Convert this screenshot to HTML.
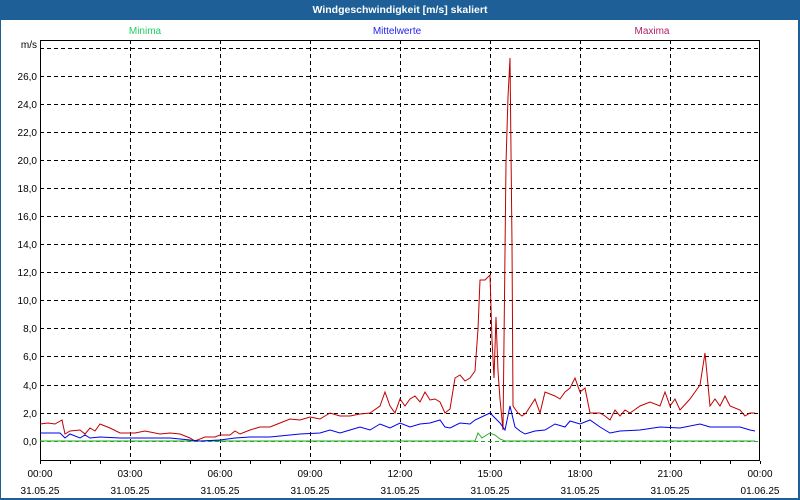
<!DOCTYPE html>
<html><head><meta charset="utf-8"><style>
html,body{margin:0;padding:0;width:800px;height:500px;overflow:hidden;background:#1d5f96}
svg{display:block}
text{font-family:"Liberation Sans",sans-serif;font-size:10px}
</style></head><body>
<svg width="800" height="500" xmlns="http://www.w3.org/2000/svg">
<rect x="0" y="0" width="800" height="500" fill="#1d5f96"/>
<rect x="1" y="20" width="797" height="478" fill="#ffffff"/>
<text x="400" y="13" fill="#fff" text-anchor="middle" font-weight="bold" style="font-size:10.5px">Windgeschwindigkeit [m/s] skaliert</text>
<text x="145" y="34" fill="#22cc66" text-anchor="middle">Minima</text>
<text x="397" y="34" fill="#2222ee" text-anchor="middle">Mittelwerte</text>
<text x="652" y="34" fill="#b0206a" text-anchor="middle">Maxima</text>
<g stroke="#000" stroke-width="1" stroke-dasharray="4,3" fill="none">
<path d="M40 48.5H760M40 76.5H760M40 104.5H760M40 132.5H760M40 160.5H760M40 188.5H760M40 216.5H760M40 244.5H760M40 272.5H760M40 300.5H760M40 328.5H760M40 356.5H760M40 385.5H760M40 413.5H760"/>
<path d="M130.5 40V460M220.5 40V460M310.5 40V460M400.5 40V460M490.5 40V460M580.5 40V460M670.5 40V460"/>
</g>
<path d="M40 441.5H760" stroke="#22aa22" stroke-dasharray="4,3"/>
<rect x="40.5" y="40.5" width="719" height="420" fill="none" stroke="#000"/>
<path d="M40.5 461v3M70.5 461v3M100.5 461v3M130.5 461v3M160.5 461v3M190.5 461v3M220.5 461v3M250.5 461v3M280.5 461v3M310.5 461v3M340.5 461v3M370.5 461v3M400.5 461v3M430.5 461v3M460.5 461v3M490.5 461v3M520.5 461v3M550.5 461v3M580.5 461v3M610.5 461v3M640.5 461v3M670.5 461v3M700.5 461v3M730.5 461v3M760.5 461v3" stroke="#000"/>
<g fill="#000" text-anchor="end">
<text x="37" y="48">m/s</text>
<text x="37" y="80">26,0</text><text x="37" y="108">24,0</text><text x="37" y="136">22,0</text><text x="37" y="164">20,0</text><text x="37" y="192">18,0</text><text x="37" y="220">16,0</text><text x="37" y="248">14,0</text><text x="37" y="276">12,0</text><text x="37" y="304">10,0</text><text x="37" y="332">8,0</text><text x="37" y="360">6,0</text><text x="37" y="389">4,0</text><text x="37" y="417">2,0</text><text x="37" y="445">0,0</text>
</g>
<g fill="#000" text-anchor="middle">
<text x="40" y="477">00:00</text><text x="130" y="477">03:00</text><text x="220" y="477">06:00</text><text x="310" y="477">09:00</text><text x="400" y="477">12:00</text><text x="490" y="477">15:00</text><text x="580" y="477">18:00</text><text x="670" y="477">21:00</text><text x="760" y="477">00:00</text>
<text x="40" y="494">31.05.25</text><text x="130" y="494">31.05.25</text><text x="220" y="494">31.05.25</text><text x="310" y="494">31.05.25</text><text x="400" y="494">31.05.25</text><text x="490" y="494">31.05.25</text><text x="580" y="494">31.05.25</text><text x="670" y="494">31.05.25</text><text x="760" y="494">01.06.25</text>
</g>
<polyline fill="none" stroke="#22aa22" points="40,441 470,441 475,441 478,433 482,438 485,436 490,433 495,435 500,439 505,441 755,441"/>
<polyline fill="none" stroke="#c00000" points="40,424 48,423 55,424 62,420 65,434 70,431 80,430 85,434 90,428 95,431 100,424 110,428 120,433 135,433 145,431 160,434 170,433 180,434 190,438 195,441 205,437 215,437 220,435 230,435 235,431 240,434 250,430 260,427 270,427 280,423 290,419 300,420 310,417 320,419 330,413 340,416 350,416 360,414 370,413 380,406 385,392 390,406 395,413 400,399 405,406 410,399 415,396 420,402 425,392 430,400 435,399 440,402 445,413 450,409 455,378 460,375 465,381 470,378 475,371 478,329 480,280 485,280 490,275 492,340 494,378 496,317 498,371 500,399 503,430 506,163 508,97 510,58 512,244 513,406 518,413 522,416 526,413 535,399 540,413 545,392 555,396 560,399 565,392 570,388 575,378 580,392 585,388 590,413 600,413 605,416 610,420 615,410 620,416 625,410 630,413 640,406 650,402 660,406 665,392 670,406 675,399 680,410 690,399 695,392 700,385 705,353 710,406 715,399 720,406 725,396 730,406 740,410 745,416 750,413 755,413"/>
<polyline fill="none" stroke="#0000ee" points="40,433 50,433 60,433 65,438 70,434 80,438 85,435 90,438 100,437 120,438 150,438 170,438 190,440 200,441 220,440 235,438 250,437 270,437 290,435 300,434 320,433 330,430 340,433 350,430 360,427 370,430 380,424 390,428 400,423 410,427 420,424 430,423 440,420 445,427 450,428 460,423 470,424 475,420 490,413 500,423 505,430 510,406 515,427 520,431 525,434 535,431 545,430 555,424 565,427 570,421 580,424 590,420 600,427 610,433 620,431 640,430 660,427 680,428 700,424 710,427 720,427 740,427 750,430 755,431"/>
</svg>
</body></html>
